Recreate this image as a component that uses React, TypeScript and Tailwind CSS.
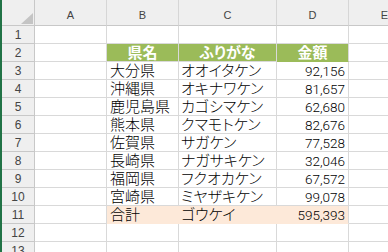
import React from "react";

const rows: [string, string, string][] = [
  ["大分県", "オオイタケン", "92,156"],
  ["沖縄県", "オキナワケン", "81,657"],
  ["鹿児島県", "カゴシマケン", "62,680"],
  ["熊本県", "クマモトケン", "82,676"],
  ["佐賀県", "サガケン", "77,528"],
  ["長崎県", "ナガサキケン", "32,046"],
  ["福岡県", "フクオカケン", "67,572"],
  ["宮崎県", "ミヤザキケン", "99,078"],
];

const hdr =
  "bg-[#efefef] border-r border-b border-[#c8c8c8] text-[#444] font-['Liberation_Sans',sans-serif]";
const cell = "border-r border-b border-[#d9d9d9]";
const jp =
  "font-['Liberation_Sans','Noto_Sans_CJK_JP',sans-serif] text-[15px] leading-[16px] text-black [font-feature-settings:'palt'] whitespace-nowrap overflow-hidden";
const num =
  "font-['Roboto',sans-serif] text-[13.5px] leading-[16px] font-light text-black whitespace-nowrap overflow-hidden";

function RowHead({ n }: { n: number }) {
  return (
    <div className={`${hdr} flex items-end justify-center pb-[1px] text-[12px] leading-[14px]`}>
      {n}
    </div>
  );
}

function Cell({
  children,
  align = "left",
  extra = "",
  font = jp,
}: {
  children?: React.ReactNode;
  align?: "left" | "right" | "center";
  extra?: string;
  font?: string;
}) {
  const j =
    align === "right" ? "justify-end pr-[3px]" : align === "center" ? "justify-center" : "justify-start pl-[2px]";
  return <div className={`${cell} ${font} ${extra} flex items-center ${j}`}>{children}</div>;
}

export default function App() {
  const green = "bg-[#9bbb59] border-[#9bbb59]";
  const peach = "bg-[#fde9d9] border-[#fde9d9]";
  return (
    <div className="w-[388px] h-[252px] overflow-hidden bg-white flex">
      <div className="w-[2px] shrink-0 bg-[#217346]" />
      <div className="grid grid-cols-[33px_72px_72px_98px_72px_72px] grid-rows-[26px_repeat(13,18px)] shrink-0">
        {/* column headers */}
        <div className={`${hdr} relative`}>
          <svg className="absolute left-[19px] top-[13px]" width="12" height="11" viewBox="0 0 12 11">
            <polygon points="12,0 12,11 0,11" fill="#c4c4c4" />
          </svg>
        </div>
        {["A", "B", "C", "D", "E"].map((c) => (
          <div
            key={c}
            className={`${hdr} flex items-end justify-center pb-[4px] text-[11px] leading-[12px] border-r-[#d6d6d6]`}
          >
            {c}
          </div>
        ))}

        {/* row 1 */}
        <RowHead n={1} />
        <Cell />
        <Cell />
        <Cell />
        <Cell />
        <Cell />

        {/* row 2: table heading */}
        <RowHead n={2} />
        <Cell />
        <Cell align="center" extra={`${green} font-bold`}>
          <span className="text-white">県名</span>
        </Cell>
        <Cell align="center" extra={`${green} font-bold`}>
          <span className="text-white">ふりがな</span>
        </Cell>
        <Cell align="center" extra="bg-[#9bbb59] border-b-[#9bbb59] font-bold">
          <span className="text-white">金額</span>
        </Cell>
        <Cell />

        {rows.map(([pref, kana, amount], i) => (
          <React.Fragment key={pref}>
            <RowHead n={i + 3} />
            <Cell />
            <Cell extra="pl-[3px] font-light">{pref}</Cell>
            <Cell extra="font-light">{kana}</Cell>
            <Cell align="right" font={num} extra="pt-[1px]">
              {amount}
            </Cell>
            <Cell />
          </React.Fragment>
        ))}

        {/* row 11: total */}
        <RowHead n={11} />
        <Cell />
        <Cell extra={`${peach} pl-[3px] font-light`}>合計</Cell>
        <Cell extra={`${peach} font-light`}>ゴウケイ</Cell>
        <Cell align="right" font={num} extra="bg-[#fde9d9] border-b-[#fde9d9] pt-[1px]">
          595,393
        </Cell>
        <Cell />

        {[12, 13].map((n) => (
          <React.Fragment key={n}>
            <RowHead n={n} />
            <Cell />
            <Cell />
            <Cell />
            <Cell />
            <Cell />
          </React.Fragment>
        ))}
      </div>
    </div>
  );
}
